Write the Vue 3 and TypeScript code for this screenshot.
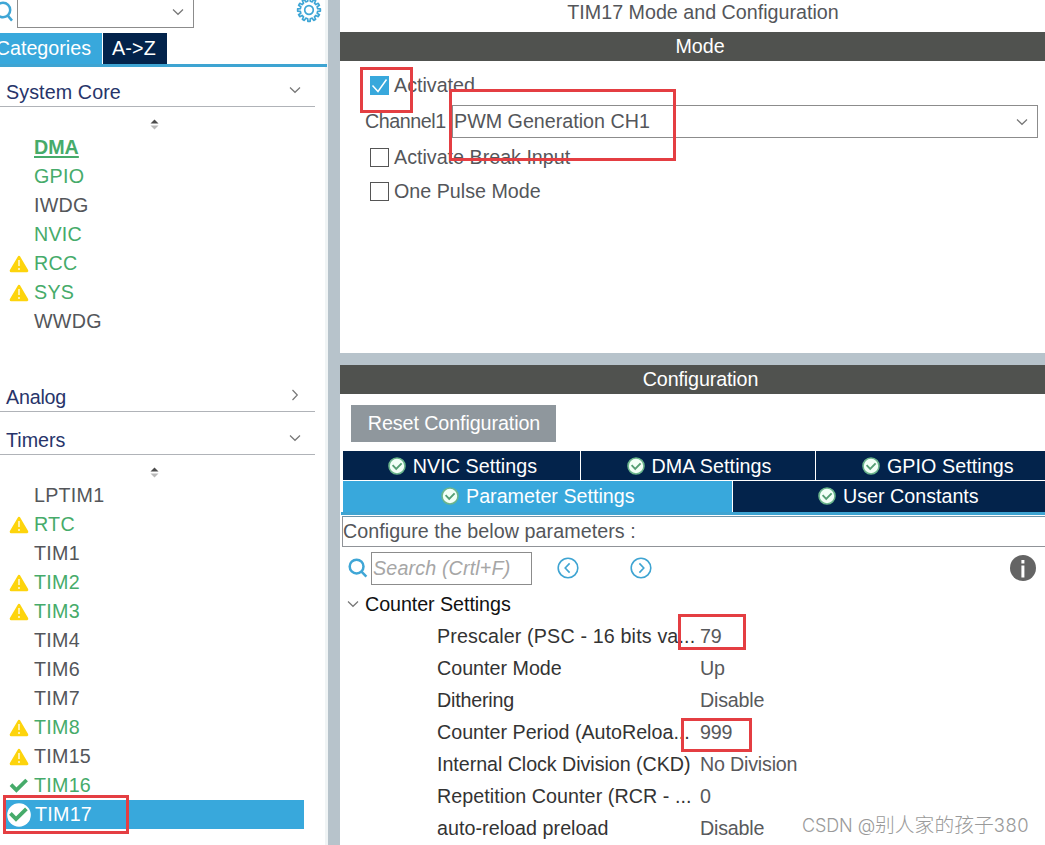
<script setup lang="ts">
interface Peripheral {
  name: string
  state?: 'on' | 'active' | 'selected'
  icon?: 'warn' | 'check' | 'badge'
}

const systemCore: Peripheral[] = [
  { name: 'DMA', state: 'active' },
  { name: 'GPIO', state: 'on' },
  { name: 'IWDG' },
  { name: 'NVIC', state: 'on' },
  { name: 'RCC', state: 'on', icon: 'warn' },
  { name: 'SYS', state: 'on', icon: 'warn' },
  { name: 'WWDG' },
]

const timers: Peripheral[] = [
  { name: 'LPTIM1' },
  { name: 'RTC', state: 'on', icon: 'warn' },
  { name: 'TIM1' },
  { name: 'TIM2', state: 'on', icon: 'warn' },
  { name: 'TIM3', state: 'on', icon: 'warn' },
  { name: 'TIM4' },
  { name: 'TIM6' },
  { name: 'TIM7' },
  { name: 'TIM8', state: 'on', icon: 'warn' },
  { name: 'TIM15', icon: 'warn' },
  { name: 'TIM16', state: 'on', icon: 'check' },
  { name: 'TIM17', state: 'selected', icon: 'badge' },
]

const groups = [
  { title: 'System Core', open: true, items: systemCore, cls: 'core' },
  { title: 'Analog', open: false, items: [] as Peripheral[], cls: 'analog' },
  { title: 'Timers', open: true, items: timers, cls: 'timers' },
]

const params = [
  { label: 'Prescaler (PSC - 16 bits va...', value: '79', tracking: 0.15 },
  { label: 'Counter Mode', value: 'Up', tracking: 0 },
  { label: 'Dithering', value: 'Disable', tracking: -0.2 },
  { label: 'Counter Period (AutoReloa...', value: '999', tracking: 0 },
  { label: 'Internal Clock Division (CKD)', value: 'No Division', tracking: -0.05 },
  { label: 'Repetition Counter (RCR - ...', value: '0', tracking: 0.06 },
  { label: 'auto-reload preload', value: 'Disable', tracking: 0.04 },
]

const topTabs = ['NVIC Settings', 'DMA Settings', 'GPIO Settings']

// Outline of a twelve-toothed gear centred on the origin.
const teeth = 12
const gearPath = Array.from({ length: teeth }, (_, i) => {
  const step = (Math.PI * 2) / teeth
  const pts: [number, number][] = [
    [8.8, -0.28],
    [11.4, -0.19],
    [11.4, 0.19],
    [8.8, 0.28],
  ]
  return pts
    .map(([r, f]) => {
      const a = (i + f) * step
      return `${(r * Math.sin(a)).toFixed(2)} ${(-r * Math.cos(a)).toFixed(2)}`
    })
    .join('L')
}).join('L')
</script>

<template>
  <div class="app">
    <aside class="side">
      <div class="finder">
        <svg class="lens" width="14" height="24" viewBox="0 0 14 24">
          <circle cx="3" cy="10" r="7.2" />
          <path d="M7.6 15.4L12 20.6" />
        </svg>
        <div class="side-combo">
          <svg class="chev" width="12" height="8" viewBox="0 0 12 8"><path d="M1 1.5L6 6.3L11 1.5" /></svg>
        </div>
        <svg class="gear" width="26" height="26" viewBox="-13 -13 26 26">
          <path :d="'M' + gearPath + 'Z'" />
          <circle r="4.3" />
        </svg>
      </div>
      <div class="side-tabs">
        <div class="stab cat"><span>Categories</span></div>
        <div class="stab az"><span>A-&gt;Z</span></div>
      </div>

      <section v-for="g in groups" :key="g.title" :class="['group', g.cls]">
        <header>
          <span>{{ g.title }}</span>
          <svg v-if="g.open" class="chev" width="12" height="8" viewBox="0 0 12 8"><path d="M1 1.5L6 6.3L11 1.5" /></svg>
          <svg v-else class="chev right" width="8" height="12" viewBox="0 0 8 12"><path d="M1.5 1L6.3 6L1.5 11" /></svg>
        </header>
        <template v-if="g.open">
          <svg class="sorter" width="9" height="11" viewBox="0 0 9 11">
            <path d="M0.5 4.5L4.5 0.5L8.5 4.5Z" fill="#4c4c4c" />
            <path d="M0.5 6.5L4.5 10.5L8.5 6.5Z" fill="#b9b9b9" />
          </svg>
          <ul>
            <li v-for="p in g.items" :key="p.name" :class="p.state">
              <span class="mark">
                <svg v-if="p.icon === 'warn'" width="20" height="18" viewBox="0 0 20 18">
                  <path d="M10 2.4L17.8 15.8H2.2Z" fill="#fdd40c" stroke="#fdd40c" stroke-width="3" stroke-linejoin="round" />
                  <path d="M10 5V11M10 13V15" stroke="#fff" stroke-width="1.3" />
                </svg>
                <svg v-else-if="p.icon === 'check'" width="20" height="16" viewBox="0 0 20 16">
                  <path d="M2 6.6L7.4 12L17.6 2" fill="none" stroke="#46ab6a" stroke-width="3.8" />
                </svg>
                <svg v-else-if="p.icon === 'badge'" width="24" height="24" viewBox="0 0 24 24">
                  <circle cx="12" cy="12" r="11.8" fill="#fff" />
                  <path d="M3.4 10.4L9 16L19.4 5.8" fill="none" stroke="#46ab6a" stroke-width="3.8" />
                </svg>
              </span>
              <span class="pname">{{ p.name }}</span>
            </li>
          </ul>
        </template>
      </section>
    </aside>

    <main>
      <section class="mode">
        <h1>TIM17 Mode and Configuration</h1>
        <h2>Mode</h2>
        <div class="opt first">
          <svg width="19" height="19" viewBox="0 0 19 19">
            <rect width="19" height="19" fill="#38a8dc" />
            <path d="M2.5 9.5L8 15.5L16.5 3.5" fill="none" stroke="#fff" stroke-width="1.5" />
          </svg>
          <span>Activated</span>
        </div>
        <div class="channel">
          <span>Channel1</span>
          <div class="combo">
            <span>PWM Generation CH1</span>
            <svg class="chev" width="12" height="8" viewBox="0 0 12 8"><path d="M1 1.5L6 6.3L11 1.5" /></svg>
          </div>
        </div>
        <div class="opt second"><i class="box"></i><span>Activate Break Input</span></div>
        <div class="opt third"><i class="box"></i><span>One Pulse Mode</span></div>
      </section>

      <section class="config">
        <h2>Configuration</h2>
        <button type="button">Reset Configuration</button>
        <div class="tabs">
          <div class="trow upper">
            <div v-for="t in topTabs" :key="t" class="tab">
              <svg class="ok" width="18" height="18" viewBox="0 0 18 18">
                <circle cx="9" cy="9" r="8" /><path d="M4.6 8.2L8.2 11.8L13.6 6.4" />
              </svg>
              <span>{{ t }}</span>
            </div>
          </div>
          <div class="trow lower">
            <div class="tab current">
              <svg class="ok" width="18" height="18" viewBox="0 0 18 18">
                <circle cx="9" cy="9" r="8" /><path d="M4.6 8.2L8.2 11.8L13.6 6.4" />
              </svg>
              <span>Parameter Settings</span>
            </div>
            <div class="tab">
              <svg class="ok" width="18" height="18" viewBox="0 0 18 18">
                <circle cx="9" cy="9" r="8" /><path d="M4.6 8.2L8.2 11.8L13.6 6.4" />
              </svg>
              <span>User Constants</span>
            </div>
          </div>
        </div>
        <div class="underline"></div>
        <div class="hint">Configure the below parameters :</div>
        <div class="tools">
          <svg class="lens" width="20" height="20" viewBox="0 0 20 20">
            <circle cx="8.6" cy="8.6" r="6.9" /><path d="M13.2 13.4L18.4 18.6" />
          </svg>
          <div class="search">Search (Crtl+F)</div>
          <svg class="nav prev" width="22" height="22" viewBox="0 0 22 22">
            <circle cx="11" cy="11" r="9.8" /><path d="M12.6 6.4L8.2 11L12.6 15.6" />
          </svg>
          <svg class="nav next" width="22" height="22" viewBox="0 0 22 22">
            <circle cx="11" cy="11" r="9.8" /><path d="M9.4 6.4L13.8 11L9.4 15.6" />
          </svg>
          <svg class="info" width="26" height="26" viewBox="0 0 26 26">
            <circle cx="13" cy="13" r="13" fill="#646464" />
            <path d="M12.9 5V8.4M12.9 10.4V22.4" stroke="#fff" stroke-width="3" />
          </svg>
        </div>
        <div class="tree-head">
          <svg class="chev" width="12" height="8" viewBox="0 0 12 8"><path d="M1 1.5L6 6.3L11 1.5" /></svg>
          <span>Counter Settings</span>
        </div>
        <dl>
          <div v-for="p in params" :key="p.label">
            <dt :style="{ letterSpacing: p.tracking + 'px' }">{{ p.label }}</dt>
            <dd>{{ p.value }}</dd>
          </div>
        </dl>
      </section>
    </main>

    <div class="mark-box m-check"></div>
    <div class="mark-box m-pwm"></div>
    <div class="mark-box m-psc"></div>
    <div class="mark-box m-arr"></div>
    <div class="mark-box m-tim"></div>
    <div class="watermark"><span class="latin">CSDN @</span>别人家的孩子<span class="digits">380</span></div>
  </div>
</template>

<style>
body { background: #fff; }
</style>

<style scoped>
* { box-sizing: border-box; margin: 0; padding: 0; }
.app {
  position: relative;
  display: flex;
  gap: 12px;
  width: 1045px;
  height: 845px;
  overflow: hidden;
  background: #b7c3cb;
  font-family: "Liberation Sans", Arial, sans-serif;
  font-size: 19.7px;
  line-height: 29px;
  color: #54565a;
  white-space: nowrap;
}
svg { display: block; flex: none; }
.chev { fill: none; stroke: #777; stroke-width: 1.2; }
.lens { fill: none; stroke: #3fa6d6; stroke-width: 2.5; }

.side { width: 328px; background: #fff; border-right: 3px solid #f0f4f5; }
.finder { display: flex; height: 33px; }
.finder .lens { width: 14px; margin-right: 3px; }
.side-combo {
  display: flex;
  justify-content: flex-end;
  width: 177px;
  height: 28px;
  padding: 8px 9px 0 0;
  border: solid #8c8c8c;
  border-width: 0 1px 1px;
}
.gear { margin: -3px 0 0 102px; fill: none; stroke: #3fa6d6; stroke-width: 1.7; stroke-linejoin: round; }
.side-tabs { display: flex; gap: 1px; width: 327px; height: 34px; border-bottom: 3px solid #3ea4d2; }
.stab { height: 31px; line-height: 30px; color: #fff; }
.cat { display: flex; justify-content: flex-end; width: 102px; padding-right: 11px; background: #38a8dc; }
.az { width: 64px; padding-left: 9px; background: #03234b; letter-spacing: 0.2px; }

.group header {
  display: flex;
  align-items: center;
  justify-content: space-between;
  width: 315px;
  height: 30px;
  padding: 0 14px 0 6px;
  border-bottom: 1px solid #b0b3b8;
  color: #27346a;
}
.group header span { position: relative; top: 1px; }
.group header .right { margin-right: 2px; }
.core { height: 305px; padding-top: 10px; }
.core header { letter-spacing: 0.1px; }
.analog { height: 43px; padding-top: 10px; letter-spacing: -0.2px; }
.timers { padding-top: 10px; }
.group header .chev { margin-top: -4px; }
.sorter { margin: 12px 0 3px 150px; }
.group ul { list-style: none; width: 304px; letter-spacing: 0.25px; }
.group li { display: flex; align-items: center; height: 29px; }
.mark { display: flex; justify-content: center; flex: none; width: 30px; margin: 1px 0 0 4px; }
.mark svg { margin-left: -1px; }
.on, .active { color: #46ab6a; }
.active .pname { font-weight: bold; letter-spacing: 0; text-decoration: underline; text-decoration-thickness: 2px; text-underline-offset: 2px; }
.selected { margin-left: 6px; padding-left: 1px; background: #38a8dc; color: #fff; }
.selected .mark { width: 24px; margin: 0 4px 0 0; }
.selected .mark svg { margin-left: 0; }

main { display: flex; flex-direction: column; gap: 12px; width: 705px; }
.mode { height: 353px; background: #fff; }
h1, h2 { font-size: inherit; font-weight: normal; text-align: center; }
h1 { height: 32px; line-height: 25px; padding-left: 21px; }
h2 { height: 29px; background: #50524f; color: #fff; padding-left: 15px; }
.config h2 { letter-spacing: -0.12px; padding-left: 16px; }
.opt { display: flex; align-items: center; height: 19px; margin-left: 30px; gap: 5px; }
.first { margin-top: 15px; }
.second { margin-top: 10px; }
.third { margin-top: 15px; }
.box { width: 19px; height: 19px; border: 1px solid #555; }
.channel { display: flex; align-items: center; margin: 10px 0 0 25px; }
.channel > span { width: 87px; letter-spacing: -0.45px; }
.combo {
  display: flex;
  align-items: center;
  justify-content: space-between;
  width: 586px;
  height: 33px;
  padding: 0 9px 0 1px;
  border: 1px solid #8c8c8c;
}

.config { height: 480px; background: #fff; }
button {
  display: block;
  width: 205px;
  height: 37px;
  margin: 11px 0 9px 11px;
  padding-left: 1px;
  border: 0;
  background: #8f979d;
  color: #fff;
  font: inherit;
  letter-spacing: -0.08px;
}
.tabs { display: flex; flex-direction: column; gap: 1px; margin-left: 3px; }
.trow { display: grid; gap: 1px; }
.upper { grid-template-columns: 237px 234px 270px; height: 29px; }
.lower { grid-template-columns: 389px 337px; height: 31px; }
.tab { display: flex; align-items: center; justify-content: center; gap: 7px; background: #03234b; color: #fff; }
.upper .tab { padding-left: 2px; letter-spacing: 0.06px; }
.upper .tab span { position: relative; top: 1px; }
.upper .tab:nth-child(3) { justify-content: flex-start; padding-left: 46px; }
.lower .tab { justify-content: flex-start; padding: 0 0 1px 85px; }
.lower .current { padding-left: 98px; background: #38a8dc; }
.ok circle { fill: #f2fff6; stroke: #6bb58c; stroke-width: 1.6; }
.ok path { fill: none; stroke: #559e73; stroke-width: 1.9; }
.underline { height: 3px; margin: 0 0 1px 1px; background: #3ea4d2; }
.hint { width: 710px; height: 31px; margin-left: 2px; border: 1px solid #909398; border-top-color: #6f93a8; letter-spacing: 0.05px; }
.tools { display: flex; align-items: center; height: 43px; padding-left: 8px; }
.tools svg { position: relative; top: -1px; }
.search {
  width: 161px;
  height: 33px;
  margin-left: 3px;
  padding-left: 1px;
  border: 1px solid #8c8c8c;
  line-height: 31px;
  font-style: italic;
  letter-spacing: 0.15px;
  color: #a6a6a6;
}
.nav { fill: none; stroke: #3ea4d2; stroke-width: 1.6; }
.prev { margin-left: 25px; }
.next { margin-left: 51px; }
.info { margin-left: 358px; }
.tree-head { display: flex; align-items: center; height: 30px; padding: 0 0 2px 7px; gap: 6px; letter-spacing: -0.06px; color: #111; }
dl { margin-left: 97px; }
dl div { display: grid; grid-template-columns: 263px auto; height: 32px; line-height: 32px; }
dt { color: #333; }
dd { color: #58595c; letter-spacing: -0.2px; }

.mark-box { position: absolute; border: 3px solid #e43e42; }
.m-check { left: 360px; top: 67px; width: 53px; height: 46px; }
.m-pwm { left: 449px; top: 89px; width: 227px; height: 72px; }
.m-psc { left: 678px; top: 614px; width: 68px; height: 36px; }
.m-arr { left: 681px; top: 718px; width: 71px; height: 34px; }
.m-tim { left: 3px; top: 795px; width: 126px; height: 39px; }
.watermark {
  position: absolute;
  left: 802px;
  top: 811px;
  font-family: "Liberation Sans", "Noto Sans CJK SC", sans-serif;
  font-weight: 300;
  font-size: 19.8px;
  color: #9a9a9a;
}
.latin { font-family: Inter, sans-serif; font-size: 18px; letter-spacing: -0.1px; }
.digits { font-family: Inter, sans-serif; font-size: 18.4px; letter-spacing: 0.5px; }
</style>
